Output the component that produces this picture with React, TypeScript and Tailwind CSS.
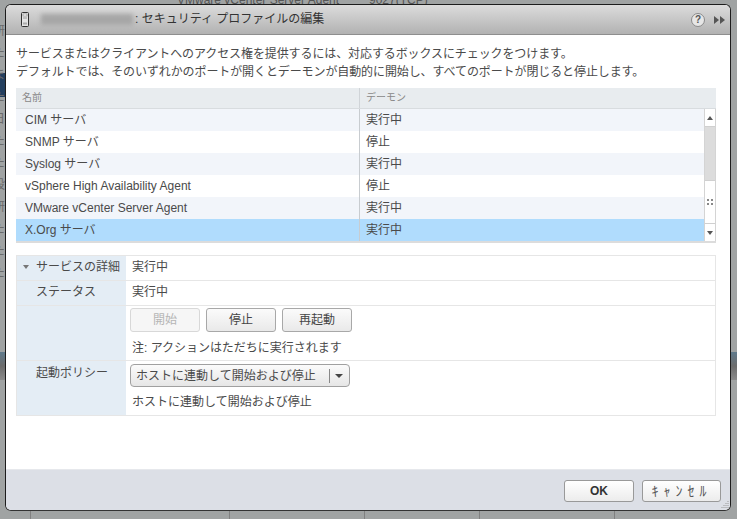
const FONT = "font-['Liberation_Sans','Noto_Sans_CJK_JP',sans-serif]";

const services = [
  { name: 'CIM サーバ', state: '実行中', alt: true },
  { name: 'SNMP サーバ', state: '停止', alt: false },
  { name: 'Syslog サーバ', state: '実行中', alt: true },
  { name: 'vSphere High Availability Agent', state: '停止', alt: false },
  { name: 'VMware vCenter Server Agent', state: '実行中', alt: true },
];

const Row = ({ name, state, bg }: { name: string; state: string; bg: string }) => (
  <div className={`flex h-[22px] items-center ${bg}`}>
    <div className="w-[344px] shrink-0 border-r border-[#c8ccd0] h-full flex items-center pl-[9px]">{name}</div>
    <div className="pl-[6px]">{state}</div>
  </div>
);

const Scrollbar = () => (
  <div className="w-[12px] shrink-0 flex flex-col bg-[#dcdcdc] border-x border-[#d4d4d4]">
    <div className="h-[18px] bg-white flex items-center justify-center border-b border-[#d0d0d0]">
      <div className="w-0 h-0 border-x-[3px] border-x-transparent border-b-[4px] border-b-[#555]" />
    </div>
    <div className="h-[53px]" />
    <div className="h-[44px] bg-white border-y border-[#d0d0d0] grid grid-cols-2 gap-x-[2px] gap-y-[2px] place-content-center justify-center px-[2px]">
      <div className="w-[2px] h-[2px] bg-[#888] justify-self-end" />
      <div className="w-[2px] h-[2px] bg-[#888]" />
      <div className="w-[2px] h-[2px] bg-[#888] justify-self-end" />
      <div className="w-[2px] h-[2px] bg-[#888]" />
    </div>
    <div className="flex-1 bg-white flex items-center justify-center">
      <div className="w-0 h-0 border-x-[3px] border-x-transparent border-t-[4px] border-t-[#555]" />
    </div>
  </div>
);

const ActionButton = ({ label, disabled }: { label: string; disabled?: boolean }) => (
  <button
    className={`w-[70px] h-[24px] rounded-[3px] border text-xs ${
      disabled
        ? 'border-[#d8d8d8] bg-[#f6f6f6] text-[#b5b5b5]'
        : 'border-[#a8a8a8] bg-gradient-to-b from-[#fbfbfb] to-[#e9e9e9] text-[#444]'
    }`}
  >
    {label}
  </button>
);

const ServerIcon = () => (
  <svg width="8" height="15" viewBox="0 0 8 15" className="shrink-0">
    <rect x="0.5" y="0.5" width="7" height="14" rx="1" fill="#e4e4e4" stroke="#333" />
    <rect x="2" y="2" width="4" height="2" fill="#fff" stroke="#666" strokeWidth="0.5" />
    <rect x="2" y="5.5" width="4" height="1" fill="#999" />
    <rect x="2" y="10.5" width="4" height="2" fill="#aaa" />
  </svg>
);

const leftEdge = ['研', 'た', 'ま', 'た', '日', 'た', 'た', '設', '研', 'た', 'た', 'た'];

export default function App() {
  return (
    <div className={`${FONT} relative w-[737px] h-[519px] overflow-hidden bg-[#a0a3a3] text-xs text-[#4a4a4a]`}>
      {/* dimmed page behind the dialog */}
      <div className="absolute left-[177px] -top-[8px] text-xs text-[#555]">VMware vCenter Server Agent</div>
      <div className="absolute left-[369px] -top-[8px] text-xs text-[#555]">9027(TCP)</div>
      <div className="absolute left-0 top-[73px] w-[6px] h-[24px] bg-[#24405f]" />
      <div className="absolute left-0 top-[20px] flex flex-col w-[5px] overflow-hidden text-[#6a6a6a] leading-[22px]">
        {leftEdge.map((c, i) => (
          <span key={i} className="-ml-[7px]">{c}</span>
        ))}
      </div>
      <div className="absolute left-0 right-0 top-[352px] h-[28px] bg-gradient-to-b from-[#5f7a8c] via-[#6c6c6c] to-[#8a8a8a]" />
      <div className="absolute left-[30px] top-[511px] w-px h-2 bg-[#808080]" />
      <div className="absolute left-[229px] top-[511px] w-px h-2 bg-[#808080]" />
      <div className="absolute left-[364px] top-[511px] w-px h-2 bg-[#808080]" />
      <div className="absolute left-[479px] top-[511px] w-px h-2 bg-[#808080]" />
      <div className="absolute left-[614px] top-[511px] w-px h-2 bg-[#808080]" />

      {/* dialog */}
      <div className="absolute left-[5px] top-[4px] w-[726px] h-[507px] flex flex-col rounded-[6px] border border-[#1c1c1c] border-b-[#333] bg-white overflow-hidden">
        <div className="h-[30px] shrink-0 flex items-center pl-[15px] pr-[5px] bg-gradient-to-b from-[#dcdcdc] to-[#b2b2b2] border-b border-[#8e8e8e] text-[#333] text-xs">
          <ServerIcon />
          <div className="ml-[12px] w-[92px] h-[11px] bg-[#a6a6a6] blur-[2px]" />
          <span className="ml-[2px] -mt-[2px]">: セキュリティ プロファイルの編集</span>
          <div className="ml-auto flex items-center gap-[9px]">
            <div className="w-[14px] h-[14px] rounded-full border border-[#8a8a8a] bg-[#e6e6e6] flex items-center justify-center text-[10px] font-bold text-[#555]">?</div>
            <div className="flex">
              <div className="w-0 h-0 border-y-[4px] border-y-transparent border-l-[5px] border-l-[#555]" />
              <div className="w-0 h-0 border-y-[4px] border-y-transparent border-l-[5px] border-l-[#555] ml-px" />
            </div>
          </div>
        </div>

        <div className="flex-1 px-[10px] pt-[10px]">
          <p className="leading-[18px] tracking-[-0.1px]">
            サービスまたはクライアントへのアクセス権を提供するには、対応するボックスにチェックをつけます。
            <br />
            デフォルトでは、そのいずれかのポートが開くとデーモンが自動的に開始し、すべてのポートが閉じると停止します。
          </p>

          <div className="mt-[7px] w-[700px] border-b-2 border-[#dcdcdc]">
            <div className="flex h-[21px] items-center bg-[#e8ecef] border-b border-[#d8dcdf] text-[10px] text-[#888]">
              <div className="w-[344px] border-r border-[#d0d4d8] h-full flex items-center pl-[6px]">名前</div>
              <div className="pl-[6px]">デーモン</div>
            </div>
            <div className="flex">
              <div className="flex-1">
                {services.map((s) => (
                  <Row key={s.name} name={s.name} state={s.state} bg={s.alt ? 'bg-[#f2f5fa]' : 'bg-white'} />
                ))}
                <Row name="X.Org サーバ" state="実行中" bg="bg-[#b0dcfd]" />
              </div>
              <Scrollbar />
            </div>
          </div>

          <div className="mt-[12px] w-[700px] border border-[#e6e6e6]">
            <div className="flex h-[25px] border-b border-[#e6e6e6]">
              <div className="w-[109px] shrink-0 bg-[#e4edf5] flex items-center pl-[6px] pb-[2px]">
                <div className="w-0 h-0 border-x-[3px] border-x-transparent border-t-[4px] border-t-[#777]" />
                <span className="ml-[7px]">サービスの詳細</span>
              </div>
              <div className="flex items-center pl-[6px] pb-[2px]">実行中</div>
            </div>
            <div className="flex h-[25px] border-b border-[#e6e6e6]">
              <div className="w-[109px] shrink-0 bg-[#e4edf5] flex items-center pl-[19px] pb-[2px]">ステータス</div>
              <div className="flex items-center pl-[6px] pb-[2px]">実行中</div>
            </div>
            <div className="flex h-[55px] border-b border-[#e6e6e6]">
              <div className="w-[109px] shrink-0 bg-[#e4edf5]" />
              <div className="pl-[4px] pt-[2px]">
                <div className="flex gap-[6px]">
                  <ActionButton label="開始" disabled />
                  <ActionButton label="停止" />
                  <ActionButton label="再起動" />
                </div>
                <div className="pl-[2px] mt-[8px] leading-[17px]">注: アクションはただちに実行されます</div>
              </div>
            </div>
            <div className="flex h-[54px]">
              <div className="w-[109px] shrink-0 bg-[#e4edf5] pl-[19px] pt-[4px]">起動ポリシー</div>
              <div className="pl-[4px] pt-[3px]">
                <div className="w-[220px] h-[23px] rounded-[4px] border border-[#a0a0a0] bg-gradient-to-b from-[#fbfbfb] to-[#e6e6e6] flex items-center pl-[5px] pr-[4px]">
                  <span className="flex-1">ホストに連動して開始および停止</span>
                  <div className="w-px h-[14px] bg-[#888] mr-[5px]" />
                  <div className="w-0 h-0 border-x-[4px] border-x-transparent border-t-[4px] border-t-[#444] mr-[2px]" />
                </div>
                <div className="pl-[2px] mt-[7px] leading-[17px]">ホストに連動して開始および停止</div>
              </div>
            </div>
          </div>
        </div>

        <div className="relative h-[41px] shrink-0 bg-[#dcdfe6] border-t border-[#e6e8ec] flex items-start justify-end gap-[8px] pr-[9px] pt-[10px]">
          <button className="w-[70px] h-[22px] rounded-[3px] border border-[#999] bg-gradient-to-b from-white to-[#ececec] text-xs font-bold text-[#333]">OK</button>
          <button className="w-[79px] h-[22px] rounded-[3px] border border-[#999] bg-gradient-to-b from-white to-[#ececec] text-[14px] leading-none text-[#555] tracking-[5px]">ｷｬﾝｾﾙ</button>
          <svg width="9" height="9" viewBox="0 0 9 9" className="absolute right-[1px] bottom-[1px]">
            <path d="M8 1v1M6 3v1M8 3v1M4 5v1M6 5v1M8 5v1M2 7v1M4 7v1M6 7v1M8 7v1" stroke="#999" />
          </svg>
        </div>
      </div>
    </div>
  );
}
